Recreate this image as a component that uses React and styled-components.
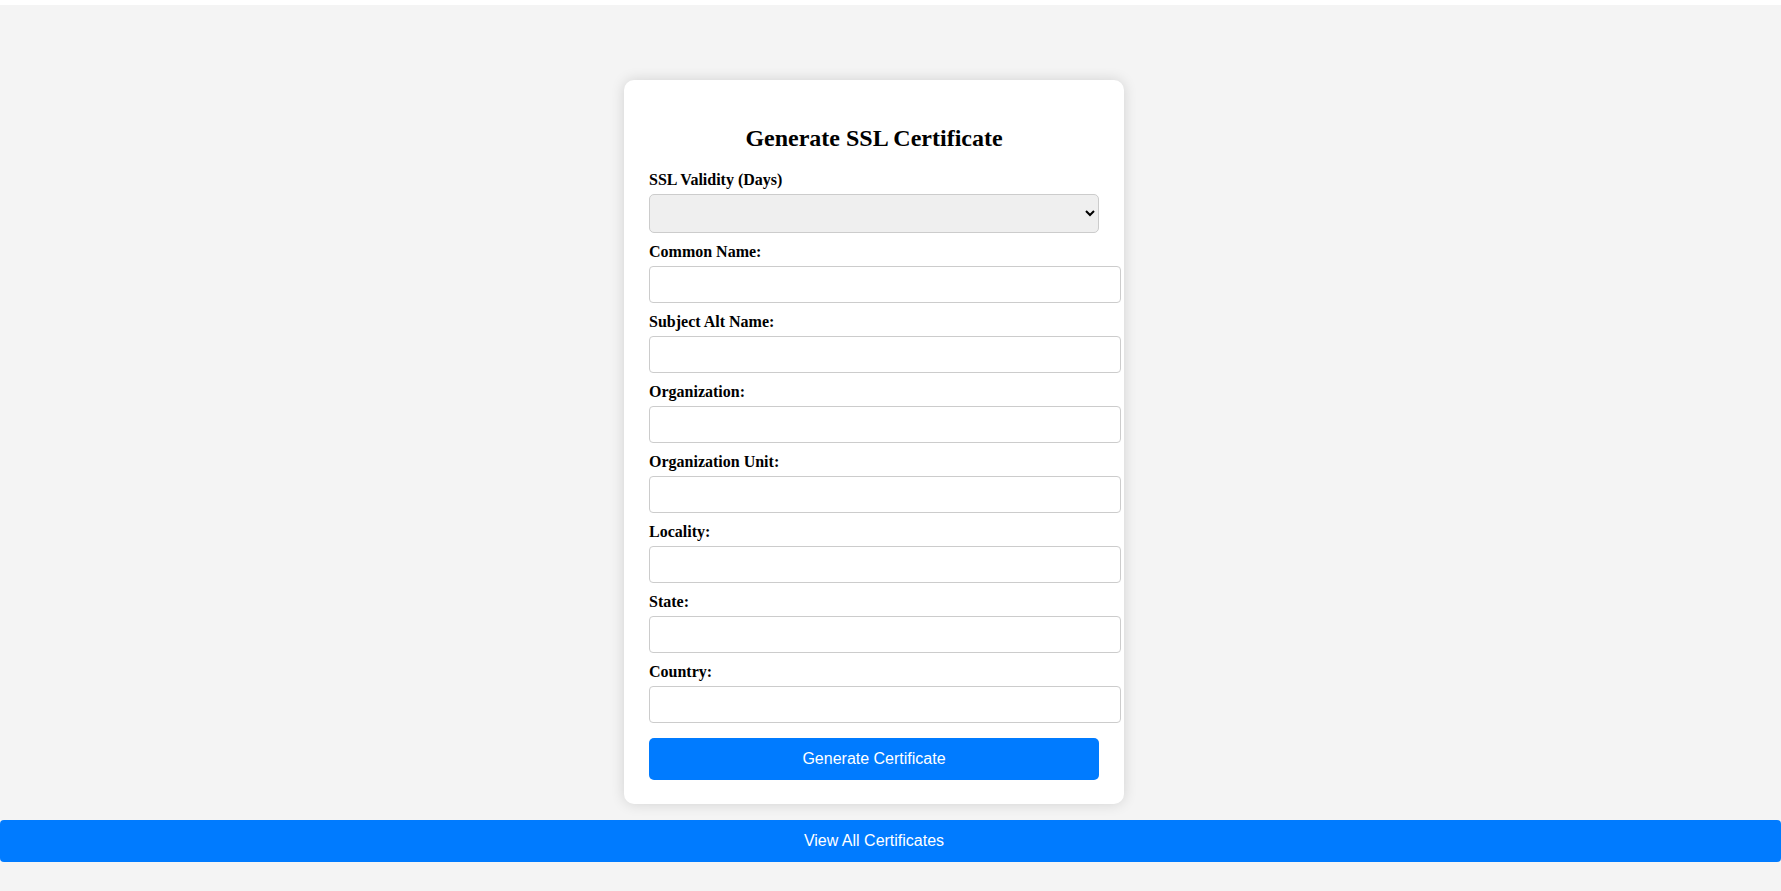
import React from "react";
import styled, { createGlobalStyle } from "styled-components";

const GlobalStyle = createGlobalStyle`
  html, body {
    margin: 0;
    padding: 0;
    background: #ffffff;
  }
  body {
    font-family: "Liberation Serif", "Times New Roman", serif;
  }
  * { box-sizing: content-box; }
`;

const Page = styled.div`
  margin-top: 5px;
  min-height: calc(100vh - 5px);
  background: #f4f4f4;
  display: flex;
  flex-direction: column;
  align-items: center;
  padding: 75px 33px 0 0;
  box-sizing: border-box;
`;

const Card = styled.div`
  width: 450px;
  padding: 25px 25px 24px;
  background: #ffffff;
  border-radius: 10px;
  box-shadow: 0 0 14px rgba(0, 0, 0, 0.14);
`;

const Title = styled.h2`
  margin: 20px 0 19px;
  font-size: 24px;
  line-height: 27px;
  font-weight: bold;
  text-align: center;
  color: #000;
`;

const Form = styled.form`
  display: flex;
  flex-direction: column;
  margin: 0;
`;

const Label = styled.label`
  display: block;
  font-size: 16px;
  line-height: 18px;
  font-weight: bold;
  color: #000;
  margin-bottom: 5px;
`;

const Select = styled.select`
  box-sizing: border-box;
  width: 100%;
  height: 39px;
  margin: 0 0 10px;
  padding: 10px;
  border: 1px solid #ccc;
  border-radius: 5px;
  background-color: #efefef;
  font-family: "Liberation Sans", Arial, sans-serif;
  font-size: 13.333px;
  color: #000;
`;

const Input = styled.input`
  display: block;
  width: 100%;
  height: 15px;
  margin: 0 0 10px;
  padding: 10px;
  border: 1px solid #ccc;
  border-radius: 4px;
  background: #fff;
  font-family: "Liberation Sans", Arial, sans-serif;
  font-size: 13.333px;
  outline: none;
`;

const Button = styled.button`
  box-sizing: border-box;
  width: 100%;
  height: 42px;
  margin-top: 5px;
  border: none;
  border-radius: 5px;
  background: #007bff;
  color: #fff;
  font-family: "Liberation Sans", Arial, sans-serif;
  font-size: 16px;
  cursor: pointer;
`;

const Bar = styled.button`
  align-self: stretch;
  box-sizing: border-box;
  width: calc(100% + 33px);
  margin: 16px -33px 0 0;
  padding: 0 33px 0 0;
  height: 42px;
  border: none;
  border-radius: 4px;
  background: #007bff;
  color: #fff;
  font-family: "Liberation Sans", Arial, sans-serif;
  font-size: 16px;
  text-align: center;
  cursor: pointer;
`;

const fields = [
  "Common Name:",
  "Subject Alt Name:",
  "Organization:",
  "Organization Unit:",
  "Locality:",
  "State:",
  "Country:",
];

export default function App() {
  return (
    <>
      <GlobalStyle />
      <Page>
        <Card>
          <Title>Generate SSL Certificate</Title>
          <Form onSubmit={(e) => e.preventDefault()}>
            <Label htmlFor="validity">SSL Validity (Days)</Label>
            <Select id="validity" defaultValue="">
              <option value=""></option>
            </Select>
            {fields.map((f, i) => (
              <React.Fragment key={f}>
                <Label htmlFor={`f${i}`}>{f}</Label>
                <Input id={`f${i}`} type="text" />
              </React.Fragment>
            ))}
            <Button type="submit">Generate Certificate</Button>
          </Form>
        </Card>
        <Bar type="button">View All Certificates</Bar>
      </Page>
    </>
  );
}
